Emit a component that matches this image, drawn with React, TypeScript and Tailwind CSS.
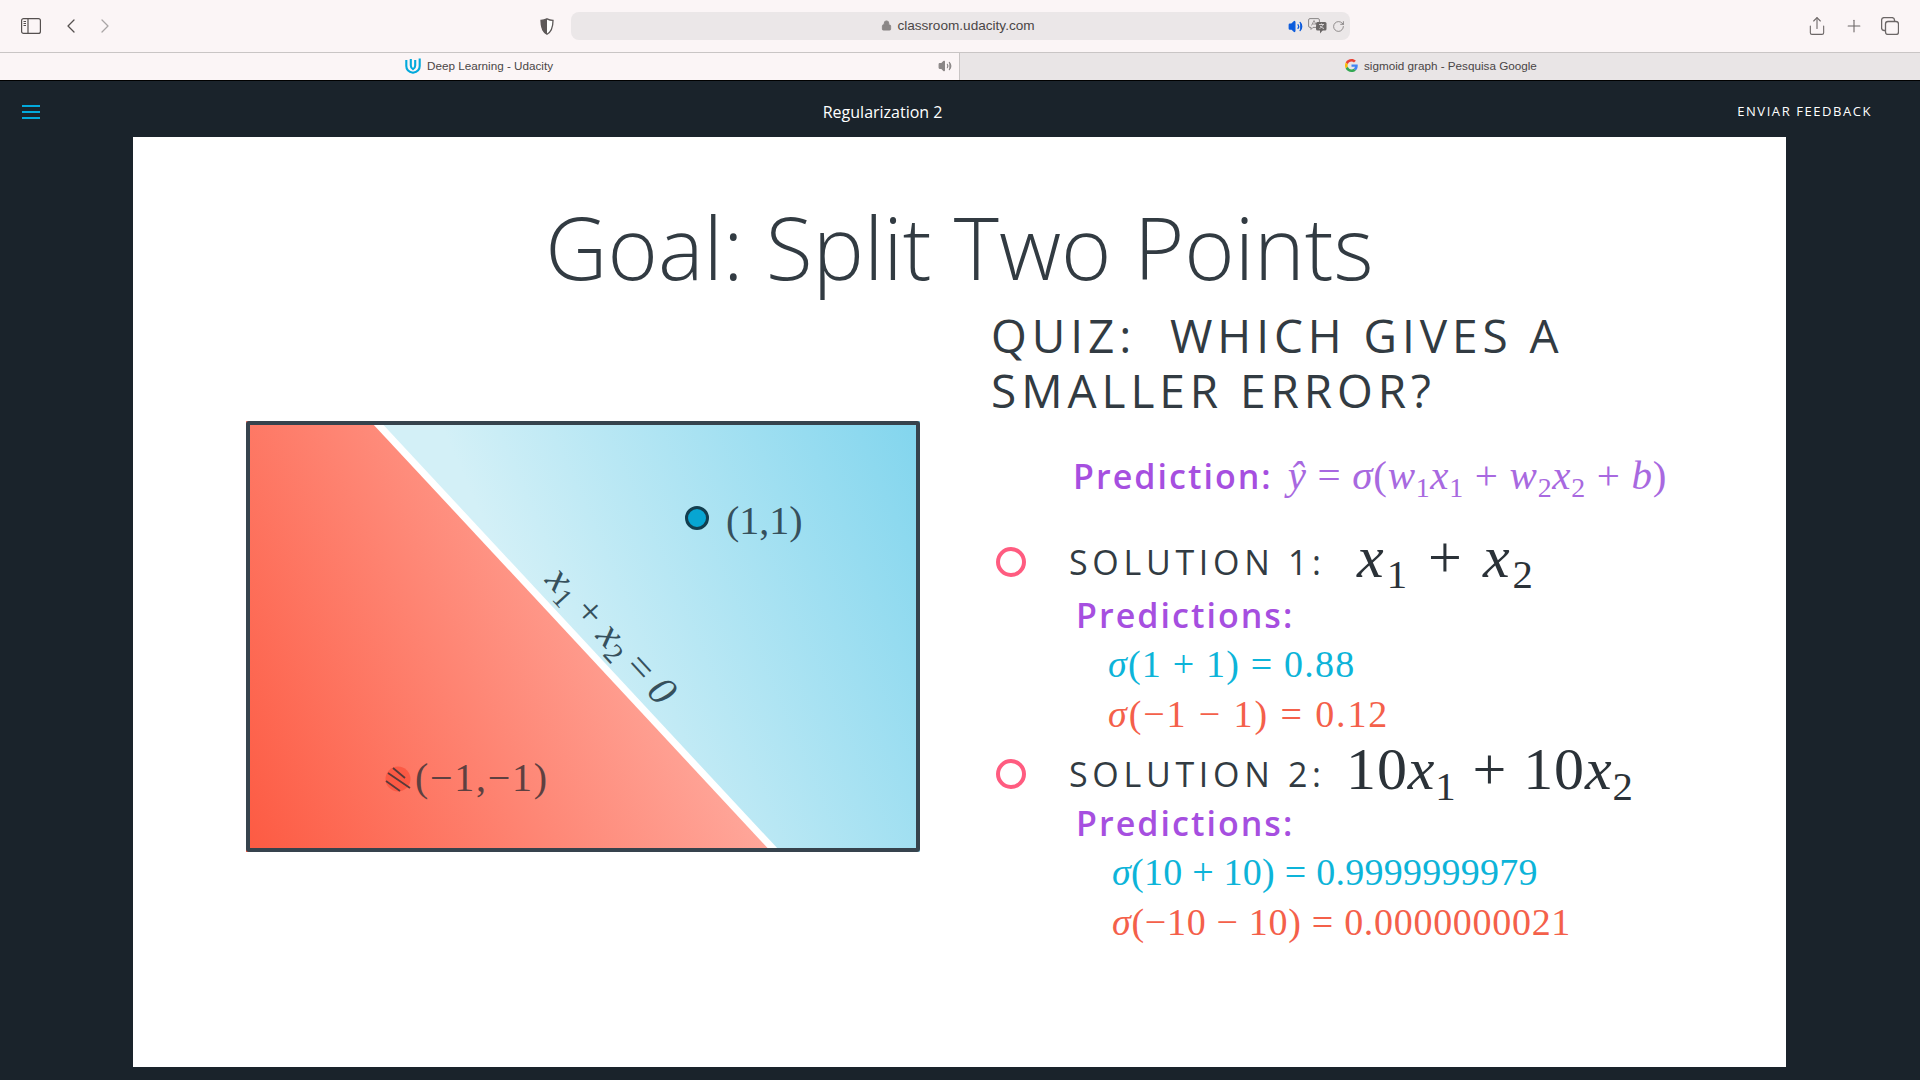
import { ChevronLeft, ChevronRight, Lock, Plus, RotateCw, Share, Volume2 } from 'lucide-react';
import type { ReactNode } from 'react';

const serif = "font-['Liberation_Serif','Times_New_Roman',serif]";
const open = "font-['Open_Sans',sans-serif]";

function V({ children }: { children: ReactNode }) {
  return <i className="italic">{children}</i>;
}

function Sub({ children }: { children: ReactNode }) {
  return <span className="text-[0.68em] align-[-0.28em] leading-none">{children}</span>;
}

function PanelIcon() {
  return (
    <svg width="20" height="16" viewBox="0 0 20 16" fill="none" stroke="#55504f" strokeWidth="1.2">
      <rect x="0.6" y="0.6" width="18.8" height="14.8" rx="2" />
      <path d="M7 .6v14.8" />
      <path d="M2.5 3.5h2.5M2.5 5.5h2.5M2.5 7.5h2.5" strokeWidth="1" />
    </svg>
  );
}

function ShieldIcon() {
  return (
    <svg width="14" height="17" viewBox="0 0 14 17">
      <path d="M7 .8c2 1 4 1.5 6 1.6 0 6-1 11-6 13.8C2 13.4 1 8.4 1 2.4 3 2.3 5 1.8 7 .8z" fill="#fff" stroke="#5d5858" strokeWidth="1.3" />
      <path d="M7 .8c-2 1-4 1.5-6 1.6 0 6 1 11 6 13.8z" fill="#5d5858" />
    </svg>
  );
}

function TranslateIcon() {
  return (
    <svg width="19" height="16" viewBox="0 0 19 16" fill="none">
      <path d="M2 .6h8a1.4 1.4 0 0 1 1.4 1.4v6a1.4 1.4 0 0 1-1.4 1.4H5l-2 2V9.4H2A1.4 1.4 0 0 1 .6 8V2A1.4 1.4 0 0 1 2 .6z" stroke="#8b8787" fill="#ebe7e8" />
      <rect x="8" y="4" width="10.5" height="8.5" rx="1.5" fill="#6b6767" />
      <path d="M12 15.5V12h3z" fill="#6b6767" />
      <path d="M3.5 7.500L6 2.500l2.500 5M4.500 6h3" stroke="#8b8787" strokeWidth="0.8" />
      <path d="M11 6.500h5M13.500 5.500v1M11.500 10.500c2-1 3-2.500 3.500-4M12 8c1 1.200 2.300 2 4 2.500" stroke="#ebe7e8" strokeWidth="0.8" />
    </svg>
  );
}

function CopyIcon() {
  return (
    <svg width="18" height="18" viewBox="0 0 18 18" fill="none" stroke="#6b6666" strokeWidth="1.3">
      <rect x="4.5" y="4.5" width="13" height="13" rx="2.5" />
      <path d="M4.500 13.500H3A2.500 2.500 0 0 1 .6 11V3A2.500 2.500 0 0 1 3 .6h8a2.500 2.500 0 0 1 2.500 2.400v1.500" />
    </svg>
  );
}

function UdacityLogo() {
  return (
    <svg width="16" height="17" viewBox="0 0 16 17" fill="none" stroke="#02a9dc" strokeWidth="2.1">
      <path d="M1.300 3v6c0 3.500 2.700 6 6.700 6.800 4-.8 6.700-3.300 6.700-6.800V1.500" />
      <path d="M5.800 2v6.500c0 1.600.9 3 2.200 3.700 1.300-.7 2.200-2.100 2.200-3.700V3" />
    </svg>
  );
}

function GoogleLogo() {
  return (
    <svg width="13" height="13" viewBox="0 0 48 48">
      <path fill="#EA4335" d="M24 9.500c3.500 0 6.700 1.200 9.200 3.600l6.900-6.900C35.900 2.400 30.500 0 24 0 14.600 0 6.500 5.400 2.600 13.200l8 6.200C12.400 13.700 17.700 9.500 24 9.500z" />
      <path fill="#4285F4" d="M47 24.500c0-1.600-.1-3.100-.4-4.500H24v9h12.900c-.6 3-2.200 5.400-4.700 7.100l7.700 6C44.400 38 47 31.800 47 24.500z" />
      <path fill="#FBBC05" d="M10.500 28.600c-.5-1.400-.8-3-.8-4.600s.3-3.200.8-4.600l-8-6.200C.9 16.500 0 20.100 0 24s.9 7.500 2.600 10.800z" />
      <path fill="#34A853" d="M24 48c6.500 0 11.900-2.100 15.900-5.900l-7.700-6c-2.200 1.400-4.900 2.300-8.200 2.300-6.300 0-11.600-4.200-13.500-9.900l-8 6.200C6.500 42.600 14.600 48 24 48z" />
    </svg>
  );
}

function BrowserChrome() {
  return (
    <>
      <div className="h-[53px] bg-[#fbf5f6] border-b border-[#c9c5c5] flex items-center">
        <div className="flex items-center w-[571px] pl-[21px]">
          <PanelIcon />
          <ChevronLeft size={24} strokeWidth={1.3} color="#55504f" className="ml-[18px]" />
          <ChevronRight size={24} strokeWidth={1.3} color="#a9a5a5" className="ml-[10px]" />
          <div className="ml-auto mr-[17px] flex"><ShieldIcon /></div>
        </div>
        <div className="w-[779px] h-[28px] bg-[#ebe7e8] rounded-lg flex items-center">
          <div className="flex-1 flex items-center justify-center pl-[57px] text-[13.6px] text-[#4a4646] font-['Liberation_Sans',Arial,sans-serif]">
            <Lock size={11} color="#8b8787" fill="#8b8787" className="mr-[5px]" />
            classroom.udacity.com
          </div>
          <div className="flex items-center gap-[5px] pr-[5px]">
            <Volume2 size={15} color="#0b5bdc" fill="#0b5bdc" />
            <TranslateIcon />
            <RotateCw size={13} color="#6b6767" strokeWidth={1.3} />
          </div>
        </div>
        <div className="flex-1 flex items-center justify-end gap-[17px] pr-[21px]">
          <Share size={20} strokeWidth={1.3} color="#6b6666" />
          <Plus size={20} strokeWidth={1.3} color="#6b6666" />
          <CopyIcon />
        </div>
      </div>
      <div className="h-[27px] flex text-[11.7px] font-['Liberation_Sans',Arial,sans-serif] text-[#4a4646]">
        <div className="w-[959px] bg-[#fbf5f6] flex items-center pl-[405px] pb-[2px]">
          <UdacityLogo />
          <span className="ml-[6px]">Deep Learning - Udacity</span>
          <Volume2 size={14} color="#8b8787" fill="#8b8787" className="ml-auto mr-[7px]" />
        </div>
        <div className="flex-1 bg-[#e9e5e6] border-l border-[#c9c5c5] flex items-center pl-[385px] pb-[2px]">
          <GoogleLogo />
          <span className="ml-[6px]">sigmoid graph - Pesquisa Google</span>
        </div>
      </div>
    </>
  );
}

function NavBar() {
  return (
    <div className={`h-[57px] bg-[#1a232b] border-t border-black flex items-center pt-[5px] pl-[22px] pr-[48px] text-white ${open}`}>
      <div className="w-[18px] flex flex-col gap-[4px]">
        <div className="h-[2px] bg-[#02a9dc]" />
        <div className="h-[2px] bg-[#02a9dc]" />
        <div className="h-[2px] bg-[#02a9dc]" />
      </div>
      <div className="flex-1 text-center text-[16px] pr-[12px]">Regularization 2</div>
      <div className="mt-[1px] text-[13px] font-medium tracking-[0.12em]">ENVIAR FEEDBACK</div>
    </div>
  );
}

function Diagram() {
  return (
    <svg width="674" height="431" viewBox="0 0 674 431" className="shrink-0">
      <defs>
        <linearGradient id="red" gradientUnits="userSpaceOnUse" x1="0" y1="431" x2="480" y2="200">
          <stop offset="0" stopColor="#fd5a42" />
          <stop offset="1" stopColor="#ffb0a5" />
        </linearGradient>
        <linearGradient id="blue" gradientUnits="userSpaceOnUse" x1="280" y1="200" x2="674" y2="30">
          <stop offset="0" stopColor="#d3f0f7" />
          <stop offset="1" stopColor="#84d6ee" />
        </linearGradient>
      </defs>
      <polygon points="0,0 129,0 530,431 0,431" fill="url(#red)" />
      <polygon points="129,0 674,0 674,431 530,431" fill="url(#blue)" />
      <line x1="129" y1="0" x2="530" y2="431" stroke="#fff" strokeWidth="7" />
      <rect x="2" y="2" width="670" height="427" rx="1" fill="none" stroke="#36434d" strokeWidth="4" />
      <circle cx="451" cy="97" r="10.5" fill="#07a5d2" stroke="#123e4f" strokeWidth="3" />
      <text x="480" y="113" fontFamily="Liberation Serif" fontSize="40" fill="#36505c">(1,1)</text>
      <circle cx="152" cy="358" r="12.5" fill="#fb5a45" />
      <path d="M147 347l12 10M142 352l22 15M140 360l14 10" stroke="#5a3a3a" strokeWidth="1.8" />
      <text x="169" y="370" fontFamily="Liberation Serif" fontSize="40" letterSpacing="1.7" fill="#5e4040">(−1,−1)</text>
      <text transform="translate(298 160) rotate(47.6)" fontFamily="Liberation Serif" fontSize="41" fill="#36505c">
        <tspan fontStyle="italic">x</tspan>
        <tspan fontSize="28" dy="7">1</tspan>
        <tspan dy="-7" dx="10">+</tspan>
        <tspan fontStyle="italic" dx="10">x</tspan>
        <tspan fontSize="28" dy="7">2</tspan>
        <tspan dy="-7" dx="10">=</tspan>
        <tspan dx="10" fontStyle="italic">0</tspan>
      </text>
    </svg>
  );
}

function Radio() {
  return <div className="w-[30px] h-[30px] rounded-full border-[4px] border-[#ff5c80] shrink-0 ml-[5px]" />;
}

function SolutionRow({ n, children, top, shift }: { n: number; children: ReactNode; top: string; shift?: string }) {
  return (
    <div className={`flex items-center h-[56px] ${top}`}>
      <Radio />
      <div className={`ml-[43px] w-[288px] text-[34px] tracking-[0.138em] text-[#323b42] ${open}`}>SOLUTION {n}:</div>
      <div className={`${serif} text-[#2b3238] leading-none ${shift ?? ''}`}>{children}</div>
    </div>
  );
}

function Predictions({ top }: { top: string }) {
  return <div className={`ml-[85px] h-[46px] leading-[44px] text-[34px] font-semibold tracking-[0.06em] text-[#a64fe0] ${open} ${top}`}>Predictions:</div>;
}

function Formula({ color, left, children }: { color: string; left: string; children: ReactNode }) {
  return <div className={`h-[50px] leading-[50px] text-[38px] whitespace-nowrap ${serif} ${color} ${left}`}>{children}</div>;
}

function QuizColumn() {
  return (
    <div className="ml-[71px] flex-1 -mt-[113px]">
      <div className={`text-[46px] leading-[55px] tracking-[0.107em] text-[#323b42] ${open}`}>
        <div className="whitespace-pre">QUIZ:  WHICH GIVES A</div>
        <div>SMALLER ERROR?</div>
      </div>
      <div className="mt-[33px] ml-[82px] h-[50px] flex items-center whitespace-nowrap">
        <span className={`text-[34px] font-semibold tracking-[0.06em] text-[#a64fe0] ${open}`}>Prediction:</span>
        <span className={`ml-[15px] text-[41px] tracking-[0.017em] text-[#a869e0] ${serif}`}>
          <V>ŷ</V> = <V>σ</V>(<V>w</V><Sub>1</Sub><V>x</V><Sub>1</Sub> + <V>w</V><Sub>2</Sub><V>x</V><Sub>2</Sub> + <V>b</V>)
        </span>
      </div>
      <SolutionRow n={1} top="mt-[33px]">
        <span className="text-[60px] tracking-[0.05em]"><V>x</V><Sub>1</Sub> + <V>x</V><Sub>2</Sub></span>
      </SolutionRow>
      <Predictions top="mt-[3px]" />
      <Formula color="text-[#0db4d9] tracking-[1.2px]" left="ml-[117px]"><V>σ</V>(1 + 1) = 0.88</Formula>
      <Formula color="text-[#f4604a] tracking-[1.9px]" left="ml-[117px]"><V>σ</V>(−1 − 1) = 0.12</Formula>
      <SolutionRow n={2} top="mt-[7px]" shift="-ml-[11px]">
        <span className="text-[60px] tracking-[0.015em]">10<V>x</V><Sub>1</Sub> + 10<V>x</V><Sub>2</Sub></span>
      </SolutionRow>
      <Predictions top="-mt-[1px]" />
      <Formula color="text-[#0db4d9] tracking-[0.25px]" left="ml-[121px]"><V>σ</V>(10 + 10) = 0.9999999979</Formula>
      <Formula color="text-[#f4604a] tracking-[0.7px]" left="ml-[121px]"><V>σ</V>(−10 − 10) = 0.0000000021</Formula>
    </div>
  );
}

export default function App() {
  return (
    <div className="w-[1920px] h-[1080px] overflow-hidden bg-[#1a232b] flex flex-col">
      <BrowserChrome />
      <NavBar />
      <div className="mx-[133px] w-[1653px] h-[930px] bg-white">
        <h1 className={`pt-[55px] text-center text-[86px] leading-[110px] font-light text-[#323b42] ${open}`}>Goal: Split Two Points</h1>
        <div className="flex pl-[113px] mt-[119px]">
          <Diagram />
          <QuizColumn />
        </div>
      </div>
    </div>
  );
}
